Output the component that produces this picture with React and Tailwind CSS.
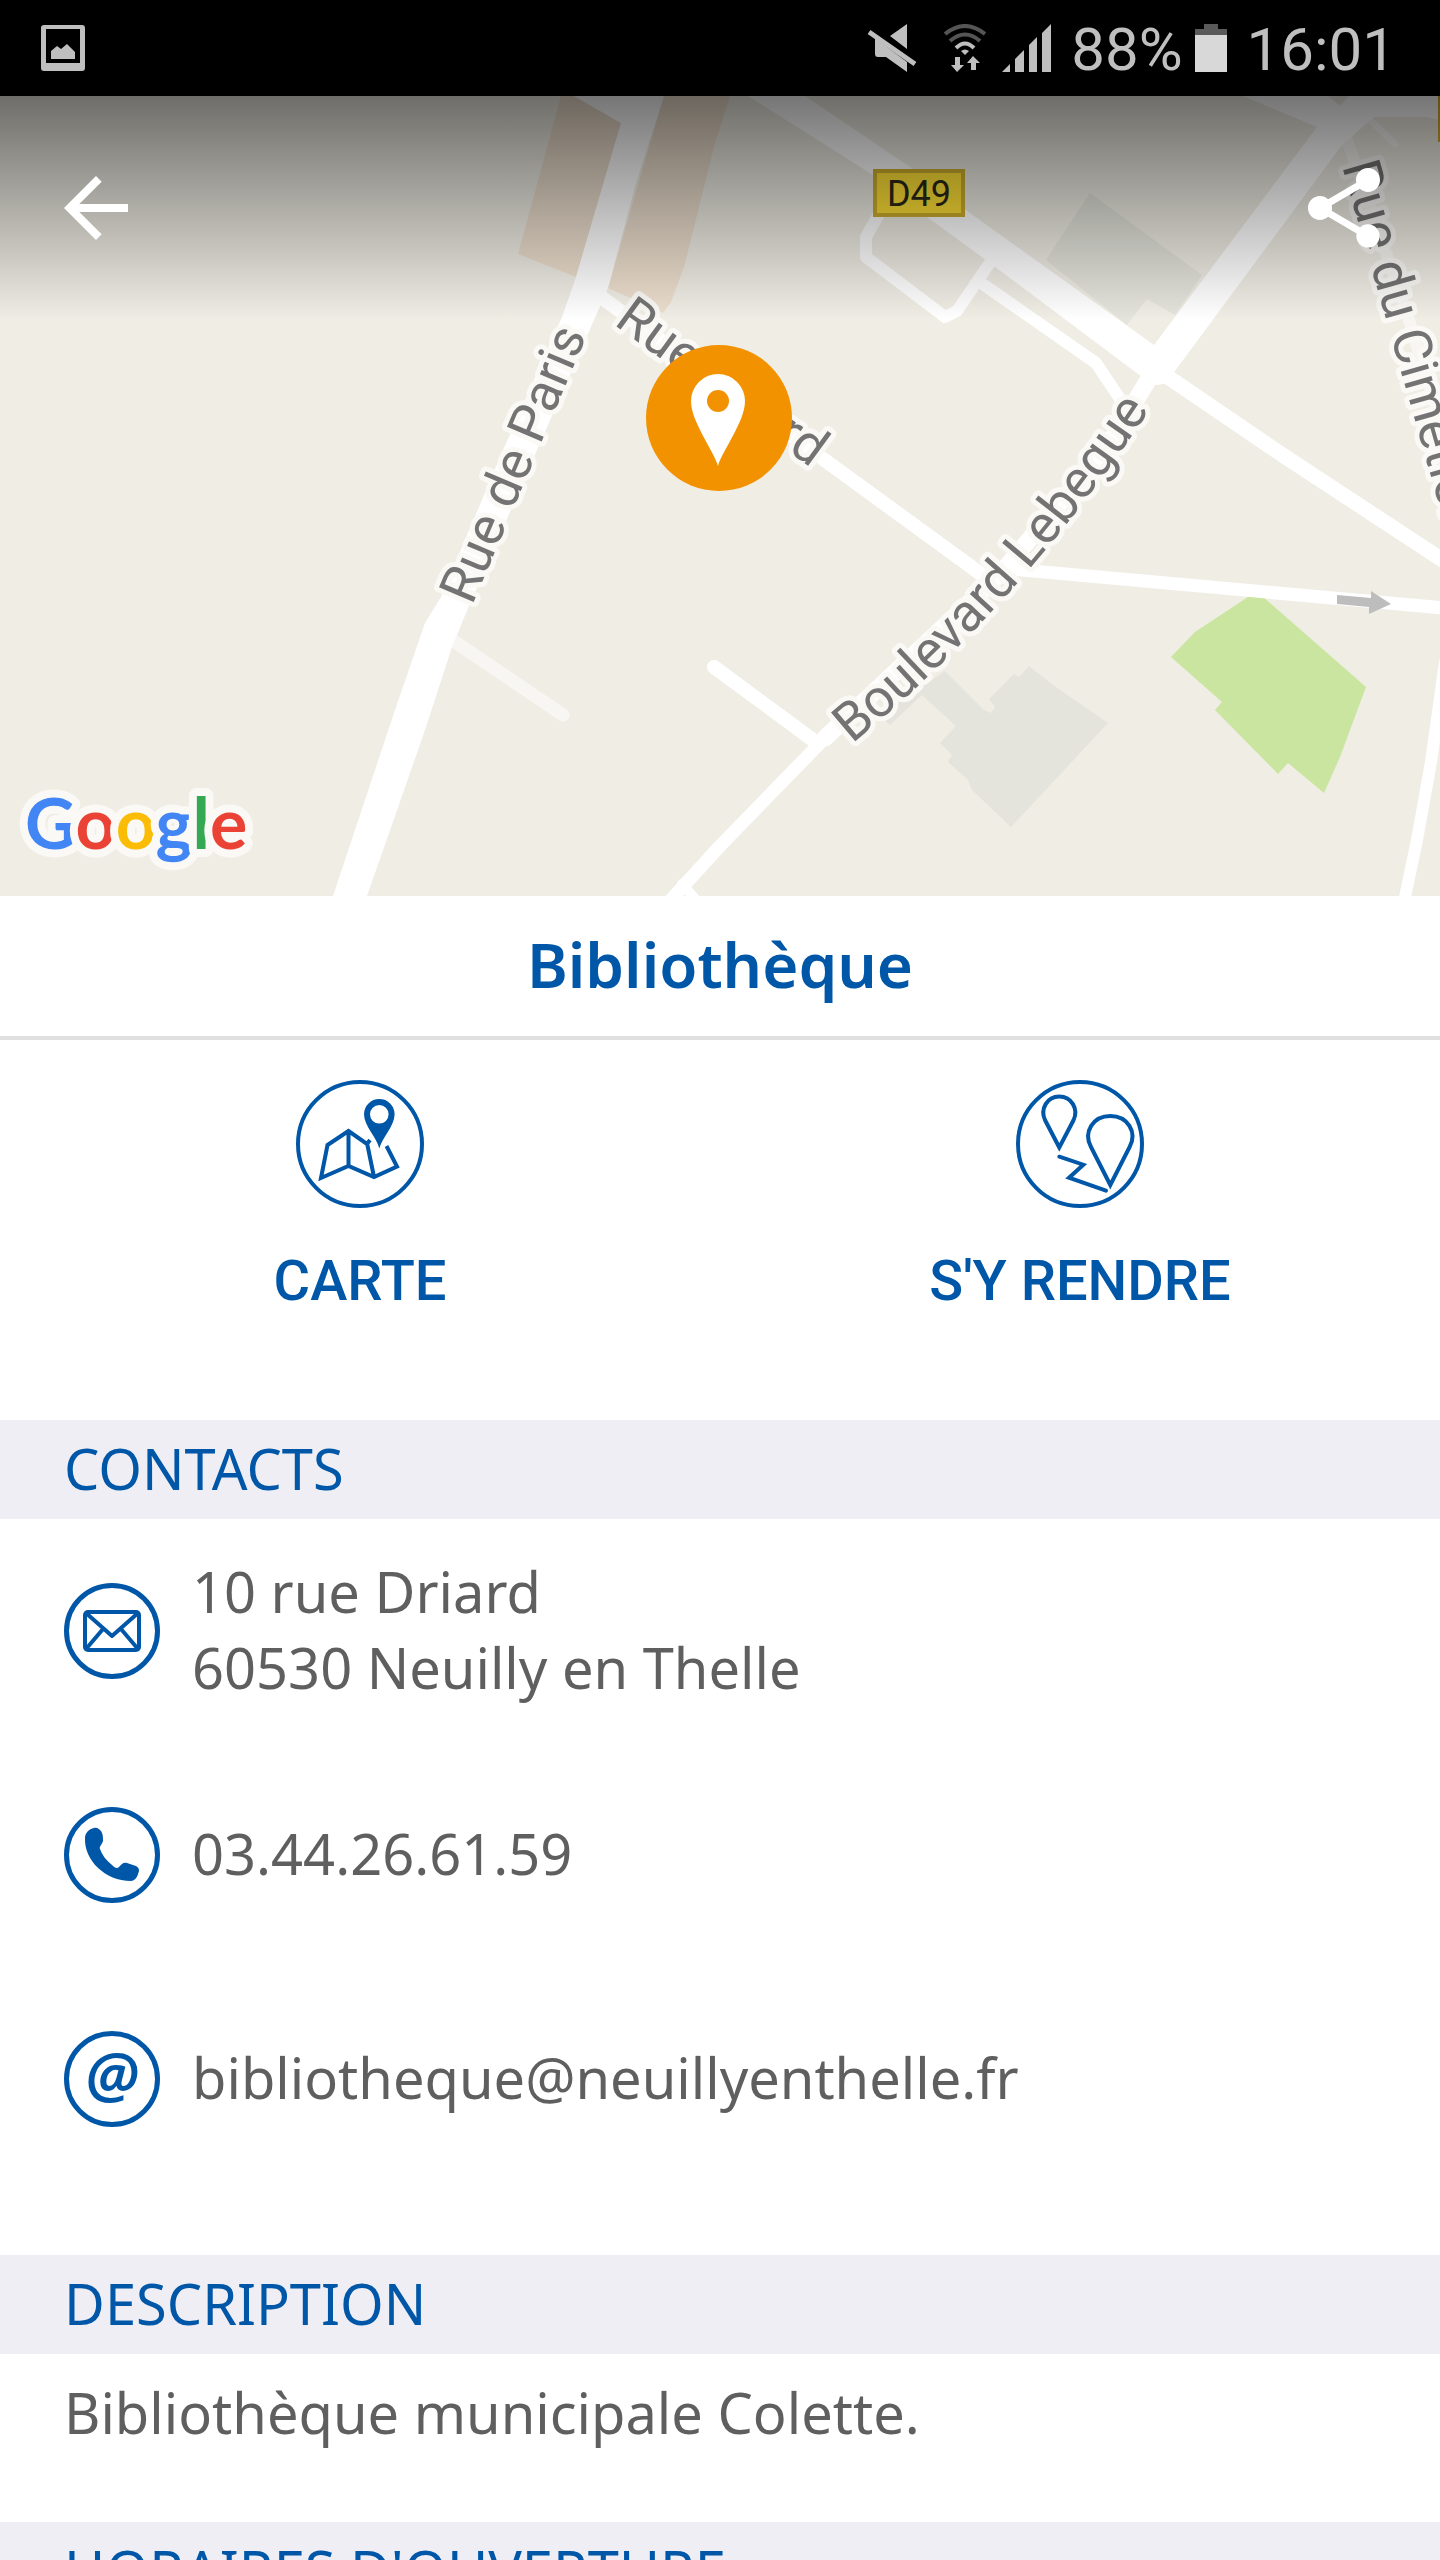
import React from "react";

const contacts = [
  {
    id: "address",
    icon: "mail",
    href: "#carte",
    lines: ["10 rue Driard", "60530 Neuilly en Thelle"],
  },
  {
    id: "phone",
    icon: "phone",
    href: "tel:0344266159",
    lines: ["03.44.26.61.59"],
  },
  {
    id: "email",
    icon: "at",
    href: "mailto:bibliotheque@neuillyenthelle.fr",
    lines: ["bibliotheque@neuillyenthelle.fr"],
  },
];

const StatusBar = () => {
  return (
    <div className="flex h-24 items-center justify-between bg-black pl-10 pr-11 font-['Roboto',sans-serif] text-[60px] leading-none text-[#bfbfbf]">
      <svg width="46" height="48" viewBox="0 0 46 48" aria-hidden="true">
        <path
          fill="#bfbfbf"
          fillRule="evenodd"
          d="M4 1h38a3 3 0 0 1 3 3v40a3 3 0 0 1-3 3H4a3 3 0 0 1-3-3V4a3 3 0 0 1 3-3zM6 5v34h34V5z"
        />
        <path fill="#bfbfbf" d="M11 35v-8l6-5 4 3 6-5 8 8v7z" />
      </svg>

      <div className="flex items-center gap-5">
        {/* Sound off */}
        <svg className="mr-2" width="48" height="48" viewBox="0 0 48 48" aria-hidden="true">
          <path fill="#bfbfbf" d="M39 0v25L22 12zM7 14l32 24v10L18 33H10a3 3 0 0 1-3-3z" />
          <path stroke="#bfbfbf" strokeWidth="5" d="M1 8l46 32" />
        </svg>
        <div className="flex items-center gap-4">
          {/* Wifi */}
          <svg width="42" height="48" viewBox="0 0 42 48" fill="none" aria-hidden="true">
            <path stroke="#555" strokeWidth="4" d="M1 10Q21-6 41 10" />
            <path stroke="#555" strokeWidth="4" d="M6 17Q21 4 36 17" />
            <path stroke="#bfbfbf" strokeWidth="4" d="M12 24Q21 15 30 24" />
            <path fill="#bfbfbf" d="M21 31l-4-4q4-3 8 0z" />
            <path fill="#bfbfbf" d="M11 33h5v8h4l-7 7-6-7h4zM27 46h5v-7h4l-7-7-6 7h4z" />
          </svg>
          {/* Network */}
          <svg width="49" height="48" viewBox="0 0 49 48" fill="#bfbfbf" aria-hidden="true">
            <path d="M0 48l8-8v8zM13 35l9-9v22h-9zM27 21l8-8v35h-8zM40 9l9-9v48h-9z" />
          </svg>
        </div>
        <div className="flex items-center gap-3">
          <span className="pt-1">88%</span>
          <svg width="32" height="48" viewBox="0 0 32 48" aria-hidden="true">
            <path fill="#5a5a5a" d="M9 0h14v5h9v7H0V5h9z" />
            <path fill="#d8d8d8" d="M0 11h32v37H0z" />
          </svg>
        </div>
        <span className="pt-1">16:01</span>
      </div>
    </div>
  );
};

const MapView = () => {
  return (
    <svg
      id="carte"
      className="block h-[800px] w-full bg-[#efede4]"
      viewBox="0 96 1440 800"
      preserveAspectRatio="xMidYMid slice"
      role="img"
      aria-label="Plan du quartier"
    >
      {/* Buildings */}
      <g fill="#ecdecd">
        <path d="M561 96h13l47 27-45 154-58-23 33-121z" />
        <path d="M664 96h66l-15 47-31 124-13 35-8 11-55-25z" />
      </g>
      <g fill="#e4e4dc">
        <path d="M1090 193l112 82-27 40-28-16-20 26-81-65z" />
        <path d="M880 715l65-44 39 39 7 3 4-6-6-8 25-25 5 3 10-11 24 19 55 38-97 104-39-37-4-10-20-18 4-7-12-12 16-17-34-31-32 30z" />
      </g>
      <path
        fill="#cae5a0"
        d="M1248 597h15l103 90-26 70-16 36-36-30-10 11-63-64 7-8-51-45 24-25z"
      />

      {/* Streets */}
      <g fill="none" stroke="#f7f6f2" strokeLinecap="round">
        <path strokeWidth="13" d="M455 642l108 73" />
        <path strokeWidth="12" d="M1347 140l62 180 40 130" />
        <path strokeWidth="7" d="M1370 120l25 24" />
      </g>
      <g fill="none" stroke="#fff" strokeLinecap="round" strokeLinejoin="round">
        <path strokeWidth="14" d="M601 297l380 277" />
        <path strokeWidth="14" d="M714 667l103 76" />
        <path strokeWidth="13" d="M667 904l53-58 105-108" />
        <path strokeWidth="10" d="M682 884l16 18" />
        <path strokeWidth="17" d="M825 738l176-165 104-123 28-45 23-38" />
        <path strokeWidth="12" d="M880 212l-14 25v20l79 60 12-6 34-50" />
        <path strokeWidth="12" d="M984 285l112 78 28 42" />
        <path strokeWidth="15" d="M1165 375l119 81 160 105" />
        <path strokeWidth="13" d="M1010 569l434 39" />
        <path strokeWidth="12" d="M1404 902l13-62 14-78 14-100" />
      </g>
      <g fill="#fff">
        <path d="M574 96h90l-28 87-28 105-71 162-71 163-14 34-27 83-58 166h-34l62-186 30-87 16-26 62-147 59-133 14-40 45-154z" />
        <path d="M748 96h57l105 71 60 46 184 132 21 28q-15 22-33 4L986 260l-59-43-54-42z" />
        <path d="M1154 345l163-218-74-31h85l12 10 9-10h91v24l-13-3h-53l-32 28-170 230z" />
      </g>
      <path fill="#bdbdbd" d="M1337 595l34 3v-7l20 13-22 10v-7l-32-3z" />

      {/* Road number */}
      <rect x="1438" y="96" width="6" height="46" fill="#cfae2c" />
      <rect x="875" y="171" width="88" height="44" fill="#ffe236" stroke="#cfae2c" strokeWidth="4" />
      <text
        x="919"
        y="206"
        textAnchor="middle"
        className="fill-[#2b2718] font-['Roboto',sans-serif] text-[36px]"
      >
        D49
      </text>

      {/* Street names */}
      <defs>
        <path id="boulevard" d="M852 744Q1022 604 1156 400" />
      </defs>
      <g
        className="fill-[#737373] stroke-[#faf9f6] font-['Roboto',sans-serif] text-[53px]"
        strokeWidth="10"
        strokeLinejoin="round"
        paintOrder="stroke"
      >
        <text transform="translate(472 606) rotate(-67)">Rue de Paris</text>
        <text transform="translate(613 324) rotate(36)">Rue Driard</text>
        <text transform="translate(1342 166) rotate(74)">Rue du Cimetière</text>
        <text>
          <textPath href="#boulevard">Boulevard Lebegue</textPath>
        </text>
      </g>

      {/* Marker */}
      <circle cx="719" cy="418" r="73" fill="#f39200" />
      <path fill="#fff" d="M718 466c-4-15-27-44-27-65a27 27 0 0 1 54 0c0 21-23 50-27 65z" />
      <circle cx="718" cy="401" r="11" fill="#f39200" />

      <text
        x="25"
        y="849"
        className="stroke-[#faf9f6] font-['Lato',sans-serif] text-[70px] font-bold"
        strokeWidth="16"
        strokeLinejoin="round"
        paintOrder="stroke"
      >
        <tspan fill="#4285f4">G</tspan>
        <tspan fill="#ea4335">o</tspan>
        <tspan fill="#fbbc05">o</tspan>
        <tspan fill="#4285f4">g</tspan>
        <tspan fill="#34a853">l</tspan>
        <tspan fill="#ea4335">e</tspan>
      </text>
    </svg>
  );
};

const Toolbar = () => {
  return (
    <div className="absolute inset-x-0 top-0 flex h-56 items-center justify-between bg-linear-to-b from-black/54 to-transparent px-12">
      <button type="button" aria-label="Retour">
        <svg width="96" height="96" viewBox="0 0 24 24" fill="#fff">
          <path d="M20 11H7.83l5.59-5.59L12 4l-8 8 8 8 1.41-1.41L7.83 13H20v-2z" />
        </svg>
      </button>
      <button type="button" aria-label="Partager">
        <svg width="96" height="96" viewBox="0 0 24 24" fill="#fff">
          <path d="M18 16.08c-.76 0-1.44.3-1.96.77L8.91 12.7c.05-.23.09-.46.09-.7s-.04-.47-.09-.7l7.05-4.11c.54.5 1.25.81 2.04.81 1.66 0 3-1.34 3-3s-1.34-3-3-3-3 1.34-3 3c0 .24.04.47.09.7L8.04 9.81C7.5 9.31 6.79 9 6 9c-1.66 0-3 1.34-3 3s1.34 3 3 3c.79 0 1.5-.31 2.04-.81l7.12 4.16c-.05.21-.08.43-.08.65 0 1.61 1.31 2.92 2.92 2.92s2.92-1.31 2.92-2.92-1.31-2.92-2.92-2.92z" />
        </svg>
      </button>
    </div>
  );
};

const MapIcon = () => (
  <svg width="128" height="128" viewBox="0 0 128 128" fill="none" stroke="#0057a8" aria-hidden="true">
    <circle cx="64" cy="64" r="62" strokeWidth="4" />
    <path
      strokeWidth="4"
      d="M74 60l-3 4-18.500-13-21 14L25 98l27.500-12L78 97l23-10.500L90.500 66M52.500 51v35M71 63l7 34"
    />
    <path
      fill="#0057a8"
      stroke="none"
      fillRule="evenodd"
      d="M83.300 68.500C81 58 68 46 68 34.300a15.300 15.300 0 0 1 30.600 0C98.600 46 86 58 83.300 68.500zm0-24.900a9.300 9.300 0 1 0 0-18.600 9.300 9.300 0 0 0 0 18.600z"
    />
  </svg>
);

const RouteIcon = () => (
  <svg width="128" height="128" viewBox="0 0 128 128" fill="none" stroke="#0057a8" aria-hidden="true">
    <circle cx="64" cy="64" r="62" strokeWidth="4" />
    <path strokeWidth="4" d="M43.300 67.500L29 40c-5-11 2-23.500 14.300-23.500S62.600 29 57.600 40z" />
    <path strokeWidth="4" d="M94.300 105L75 67c-8-15 2-31 19.300-31s27.300 16 19.300 31z" />
    <path strokeWidth="4" strokeLinecap="round" d="M43.300 76.700l24 8L53 97.700l37 13" />
  </svg>
);

const ContactIcon = ({ name }) => (
  <svg
    className="shrink-0"
    width="96"
    height="96"
    viewBox="0 0 96 96"
    fill="none"
    stroke="#0057a8"
    aria-hidden="true"
  >
    <circle cx="48" cy="48" r="45.500" strokeWidth="5" />
    {name === "mail" && (
      <path
        strokeWidth="4"
        strokeLinejoin="round"
        d="M24 29h48a3 3 0 0 1 3 3v32a3 3 0 0 1-3 3H24a3 3 0 0 1-3-3V32a3 3 0 0 1 3-3zM22 30l26 23 26-23M22 66l17-20M74 66L57 46"
      />
    )}
    {name === "phone" && (
      <path
        fill="#0057a8"
        stroke="none"
        d="M30 21c-5 1-9 5-9 10-1 22 20 43 46 43 3 0 6-3 7-7 2-4 1-6-2-8l-9-3c-4-1-5 1-8 4-2 2-4 1-7-2-6-5-10-10-12-16-1-3 2-4 3-8 0-4 0-7-2-10-2-2-4-4-7-3z"
      />
    )}
    {name === "at" && (
      <text
        x="48"
        y="66"
        textAnchor="middle"
        fill="#0057a8"
        stroke="none"
        className="font-['Noto_Sans',sans-serif] text-[62px] font-semibold italic"
      >
        @
      </text>
    )}
  </svg>
);

const SectionTitle = ({ children }) => (
  <h2 className="flex h-[99px] items-center bg-[#efeef5] px-16 pb-1 text-[#0057a8]">{children}</h2>
);

const App = () => {
  return (
    <div className="flex h-screen flex-col overflow-hidden bg-white font-['Noto_Sans',sans-serif] text-[56px] leading-[76px] text-[#5f5f5f]">
      <StatusBar />

      <main className="min-h-0 flex-1 overflow-hidden">
        <div className="relative">
          <MapView />
          <Toolbar />
        </div>

        <h1 className="flex h-36 items-center justify-center border-b-4 border-[#e0e0e0] pb-1 text-[62px] font-semibold text-[#0057a8]">
          Bibliothèque
        </h1>

        {/* Actions */}
        <div className="grid grid-cols-2 pb-[106px] pt-10 font-['Roboto',sans-serif] leading-[66px] font-medium text-[#0057a8]">
          <button type="button" className="flex flex-col items-center gap-10">
            <MapIcon />
            CARTE
          </button>
          <button type="button" className="flex flex-col items-center gap-10">
            <RouteIcon />
            S'Y RENDRE
          </button>
        </div>

        {/* Contacts */}
        <SectionTitle>CONTACTS</SectionTitle>
        <div className="px-16 pb-16">
          {contacts.map((contact) => (
            <a key={contact.id} href={contact.href} className="flex h-56 items-center gap-8">
              <ContactIcon name={contact.icon} />
              <span className="pb-1">
                {contact.lines.map((line) => (
                  <span key={line} className="block">
                    {line}
                  </span>
                ))}
              </span>
            </a>
          ))}
        </div>

        {/* Description */}
        <SectionTitle>DESCRIPTION</SectionTitle>
        <p className="px-16 pb-18 pt-5">Bibliothèque municipale Colette.</p>

        <SectionTitle>HORAIRES D'OUVERTURE</SectionTitle>
      </main>
    </div>
  );
};

export default App;
